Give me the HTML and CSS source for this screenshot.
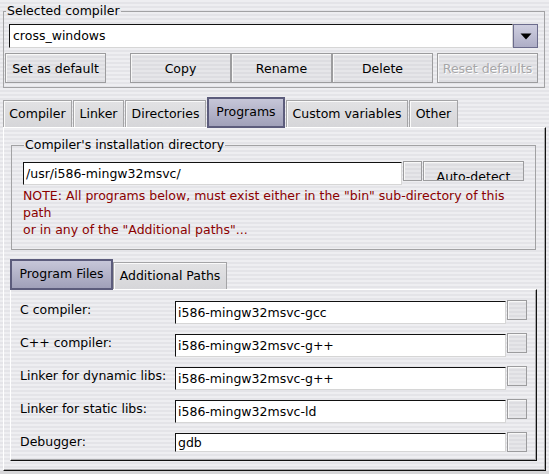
FILE: index.html
```html
<!DOCTYPE html>
<html>
<head>
<meta charset="utf-8">
<link rel="stylesheet" href="styles.css">
</head>
<body>
<div class="app">
  <fieldset class="group sel-group">
    <legend>Selected compiler</legend>
    <div class="combo">
      <div class="combo-text">cross_windows</div>
      <div class="combo-btn">
        <svg width="12" height="7" viewBox="0 0 12 7"><path d="M0.5 0.5 H11.5 L6 6.5 Z" fill="#000"/></svg>
      </div>
    </div>
    <div class="btn-row">
      <button class="btn">Set as default</button>
      <button class="btn gap-big">Copy</button>
      <button class="btn">Rename</button>
      <button class="btn">Delete</button>
      <button class="btn gap-small" disabled>Reset defaults</button>
    </div>
  </fieldset>

  <div class="tabs">
    <div class="tab t-compiler">Compiler</div>
    <div class="tab t-linker">Linker</div>
    <div class="tab t-dirs">Directories</div>
    <div class="tab active t-programs">Programs</div>
    <div class="tab t-custom">Custom variables</div>
    <div class="tab t-other">Other</div>
  </div>

  <div class="panel">
    <fieldset class="group inst-group">
      <legend>Compiler's installation directory</legend>
      <div class="inst-row">
        <div class="field inst-field">/usr/i586-mingw32msvc/</div>
        <div class="btn small-btn"></div>
        <div class="btn auto-btn">Auto-detect</div>
      </div>
      <div class="note">NOTE: All programs below, must exist either in the "bin" sub-directory of this path<br>or in any of the "Additional paths"...</div>
    </fieldset>

    <div class="tabs subtabs">
      <div class="tab active t-files">Program Files</div>
      <div class="tab t-paths">Additional Paths</div>
    </div>

    <div class="subpanel">
      <div class="prog-row">
        <div class="prog-label">C compiler:</div>
        <div class="field">i586-mingw32msvc-gcc</div>
        <div class="btn sq-btn"></div>
      </div>
      <div class="prog-row">
        <div class="prog-label">C++ compiler:</div>
        <div class="field">i586-mingw32msvc-g++</div>
        <div class="btn sq-btn"></div>
      </div>
      <div class="prog-row">
        <div class="prog-label">Linker for dynamic libs:</div>
        <div class="field">i586-mingw32msvc-g++</div>
        <div class="btn sq-btn"></div>
      </div>
      <div class="prog-row">
        <div class="prog-label">Linker for static libs:</div>
        <div class="field">i586-mingw32msvc-ld</div>
        <div class="btn sq-btn"></div>
      </div>
      <div class="prog-row last">
        <div class="prog-label">Debugger:</div>
        <div class="field">gdb</div>
        <div class="btn sq-btn"></div>
      </div>
    </div>
  </div>
</div>
</body>
</html>
```
FILE: styles.css
```css
* { box-sizing: border-box; }
html, body { margin: 0; padding: 0; }
body {
  width: 549px;
  height: 474px;
  overflow: hidden;
  font-family: "DejaVu Sans", "Noto Sans", sans-serif;
  font-size: 12.5px;
  color: #000;
  background:
    linear-gradient(#d6d6d8, #d6d6d8) left bottom / 100% 3px no-repeat,
    repeating-linear-gradient(to bottom, #eeeef1 0 2px, #e4e4e8 2px 4px);
}
.app {
  display: flex;
  flex-direction: column;
  height: 474px;
  padding: 3px 3px 0 3px;
}

/* group boxes */
.group {
  margin: 0;
  border: 1px solid #a2a2a4;
  min-width: 0;
}
.group > legend {
  margin-left: 1px;
  padding: 0 1px;
  line-height: 16px;
}
.sel-group {
  margin-right: 1px;
  padding: 5px 6px 4px 1px;
}

/* combo */
.combo {
  display: flex;
  height: 24px;
  margin-left: 4px;
}
.combo-text {
  flex: 1;
  background: #fff;
  border-top: 1px solid #111;
  border-left: 1px solid #111;
  border-right: 1px solid #d6d6d6;
  border-bottom: 1px solid #d6d6d6;
  padding-left: 3px;
  line-height: 22px;
}
.combo-btn {
  width: 25px;
  display: flex;
  align-items: center;
  justify-content: center;
  border: 1px solid #6c6c8c;
  background: linear-gradient(#cfcfe0, #aeaec6);
}

/* buttons */
.btn {
  font: inherit;
  color: #000;
  height: 30px;
  width: 101px;
  padding: 0;
  border: 1px solid #9c9c9e;
  box-shadow: inset 1px 1px 0 #f8f8f8;
  background: repeating-linear-gradient(to bottom, #e6e6e9 0 2px, #dddde1 2px 4px);
}
.btn[disabled] {
  color: #a6a6a8;
  text-shadow: 1px 1px 0 #fff;
}
.btn-row {
  display: flex;
  margin-top: 5px;
}
.gap-big { margin-left: 24px; }
.gap-small { margin-left: 4px; }

/* tabs */
.tabs {
  display: flex;
  align-items: flex-end;
  gap: 1px;
  height: 30px;
  margin-top: 9px;
  position: relative;
  z-index: 1;
}
.tab {
  height: 27px;
  padding: 0;
  text-align: center;
  line-height: 25px;
  border: 1px solid #a4a4a6;
  border-bottom: none;
  box-shadow: inset 1px 1px 0 #fafafa;
  background: linear-gradient(#e2e2e4, #d6d6d9);
  white-space: nowrap;
}
.tab.active {
  height: 31px;
  margin-bottom: -1px;
  line-height: 26px;
  border: 2px solid #5c5c7c;
  box-shadow: none;
  background: linear-gradient(#c6c6d8, #a0a0b9);
}
.t-compiler { width: 69px; }
.t-linker { width: 51px; }
.t-dirs { width: 81px; }
.t-programs { width: 78px; }
.t-custom { width: 122px; }
.t-other { width: 49px; }

/* main panel */
.panel {
  flex: 1;
  margin-bottom: 3px;
  display: flex;
  flex-direction: column;
  border-top: 1px solid #fff;
  border-left: 1px solid #fff;
  border-right: 1px solid #111;
  border-bottom: 1px solid #111;
  box-shadow: inset -1px -1px 0 #a8a8aa;
}
.inst-group {
  margin: 9px 9px 0 7px;
  padding: 8px 11px 11px 11px;
}
.inst-row {
  display: flex;
  align-items: flex-start;
}
.field {
  background: #fff;
  border-top: 1px solid #111;
  border-left: 1px solid #111;
  border-right: 1px solid #d6d6d6;
  border-bottom: 1px solid #d6d6d6;
  padding-left: 2px;
  height: 23px;
  line-height: 21px;
  white-space: nowrap;
  overflow: hidden;
}
.inst-field {
  flex: 1;
  margin-top: 1px;
}
.small-btn {
  width: 19px;
  height: 20px;
  margin-left: 1px;
}
.auto-btn {
  width: 101px;
  height: 20px;
  margin-left: 1px;
  padding-top: 8px;
  line-height: 14px;
  overflow: hidden;
  text-align: center;
}
.note {
  margin-top: 2px;
  color: #8b0000;
  line-height: 17px;
}

/* sub tabs */
.subtabs {
  margin-top: 9px;
  margin-left: 6px;
  gap: 0;
}
.t-files { width: 103px; }
.t-paths { width: 114px; }

/* sub panel */
.subpanel {
  flex: 1;
  margin: 0 8px 9px 6px;
  padding: 10px 9px 0 9px;
  border-top: 1px solid #fff;
  border-left: 1px solid #fff;
  border-right: 1px solid #111;
  border-bottom: 1px solid #111;
  box-shadow: inset -1px -1px 0 #a8a8aa;
  display: flex;
  flex-direction: column;
  gap: 9px;
}
.prog-row {
  display: grid;
  grid-template-columns: 154px 1fr 20px;
  column-gap: 1px;
  align-items: start;
  height: 24px;
}
.prog-row .field { margin-top: 1px; }
.prog-row.last .field { height: 19px; line-height: 17px; }
.prog-label {
  line-height: 20px;
  white-space: nowrap;
}
.sq-btn {
  width: 20px;
  height: 20px;
}
```
